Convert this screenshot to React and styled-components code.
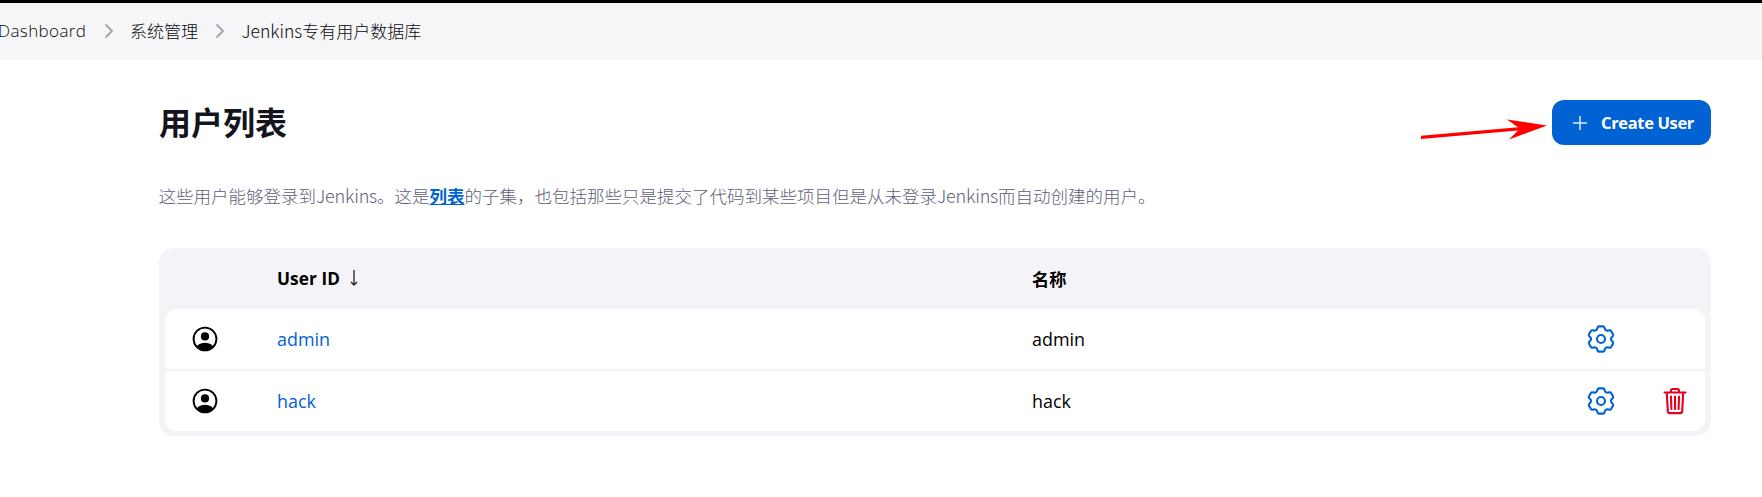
import React from "react";
import styled, { createGlobalStyle } from "styled-components";

const GlobalStyle = createGlobalStyle`
  * { box-sizing: border-box; }
  body {
    margin: 0;
    background: #fff;
    color: #14141f;
    font-family: "Open Sans", "Noto Sans CJK SC", sans-serif;
    overflow: hidden;
  }
`;

const Page = styled.div`
  height: 497px;
  border-top: 3px solid #000;
  overflow: hidden;
`;

const Breadcrumbs = styled.nav`
  display: flex;
  align-items: center;
  height: 57px;
  padding-bottom: 2px;
  background: #f6f6f9;
  color: #08080f;
  font-size: 17px;
  font-weight: 300;
  white-space: nowrap;
`;

const Crumb = styled.span`
  width: ${(p) => p.$width}px;
  margin-left: ${(p) => p.$indent || 0}px;
`;

const Latin = styled.span`
  font-family: "Open Sans", sans-serif;
  letter-spacing: ${(p) => p.$spacing || 0}px;
`;

const ProductName = styled.span`
  font-family: "Noto Sans CJK SC", sans-serif;
  font-size: ${(p) => p.$size}px;
  letter-spacing: ${(p) => p.$spacing || 0}px;
`;

const Chevron = styled.svg`
  width: 8px;
  height: 14px;
  margin: 1px 17.5px 0 18px;
  fill: none;
  stroke: #a3a3b3;
  stroke-width: 1.8;
  stroke-linecap: round;
  stroke-linejoin: round;
`;

const Main = styled.main`
  padding: 40px 51px 0 159px;
`;

const AppBar = styled.header`
  display: flex;
  align-items: center;
  height: 45px;
`;

const Title = styled.h1`
  margin: 0;
  font-size: 32px;
  line-height: 44px;
  font-weight: 700;
`;

const Pointer = styled.svg`
  width: 128px;
  height: 24px;
  margin: 4px 3px 0 auto;
  overflow: visible;
`;

const CreateButton = styled.button`
  display: flex;
  align-items: center;
  width: 159px;
  height: 45px;
  padding: 0 0 0 21px;
  gap: 14px;
  border: 0;
  border-radius: 12px;
  background: #0062d3;
  color: #fff;
  font: 700 16.5px "Open Sans", sans-serif;
  white-space: nowrap;
`;

const PlusIcon = styled.svg`
  flex: none;
  width: 14px;
  height: 14px;
  stroke: #e0ebf9;
  stroke-width: 1.5;
`;

const Description = styled.p`
  margin: 35px 0 0 -0.5px;
  height: 30px;
  line-height: 30px;
  font-size: 17.5px;
  font-weight: 300;
  color: #5e5e78;
  white-space: nowrap;
`;

const InlineLink = styled.a`
  color: #0062d3;
  font-weight: 700;
  text-decoration: underline;
`;

const Table = styled.section`
  display: grid;
  grid-template-rows: 61px 122px;
  margin-top: 38px;
  height: 188px;
  padding: 0 6px 5px;
  border-radius: 15px;
  background: #f3f3f8;
  color: #000;
`;

const Row = styled.div`
  display: grid;
  grid-template-columns: 112px 755px 1fr 74px 67px;
  align-items: center;
  font-size: 17.9px;
`;

const HeadRow = styled(Row)`
  padding-bottom: 1px;
  font-size: 17.2px;
  font-weight: 700;
`;

const Body = styled.div`
  display: grid;
  grid-template-rows: 60px 60px;
  row-gap: 2px;
`;

const UserRow = styled(Row)`
  background: #fff;
  border-radius: ${(p) => (p.$last ? "4px 4px 12px 12px" : "12px 12px 4px 4px")};
`;

const Cell = styled.div`
  display: flex;
  align-items: center;
`;

const AvatarCell = styled(Cell)`
  padding-left: 27px;
`;

const ActionCell = styled(Cell)`
  justify-content: flex-end;
  padding-right: ${(p) => p.$inset}px;
`;

const UserLink = styled.a`
  color: #0062d3;
`;

const SortArrow = styled.svg`
  width: 8px;
  height: 16px;
  margin-left: 10px;
  fill: none;
  stroke: #222;
  stroke-width: 1.3;
`;

const Avatar = styled.svg`
  width: 26px;
  height: 26px;
`;

const ActionIcon = styled.svg`
  width: 28px;
  height: 28px;
  fill: none;
  stroke: ${(p) => p.$color};
  stroke-width: 2.1;
  stroke-linecap: round;
  stroke-linejoin: round;
`;

const ChevronIcon = () => (
  <Chevron viewBox="0 0 8 14">
    <path d="M1 1l6 6-6 6" />
  </Chevron>
);

const PersonIcon = () => (
  <Avatar viewBox="0 0 26 26">
    <defs>
      <clipPath id="person-disc">
        <circle cx="13" cy="13" r="11.5" />
      </clipPath>
    </defs>
    <circle cx="13" cy="13" r="11.4" fill="none" stroke="#000" strokeWidth="1.9" />
    <circle cx="13" cy="10.4" r="4.1" />
    <ellipse cx="13" cy="23" rx="9" ry="6.2" clipPath="url(#person-disc)" />
  </Avatar>
);

const GearIcon = () => (
  <ActionIcon $color="#0062d3" viewBox="0 0 28 28">
    <circle cx="14" cy="14" r="4" />
    <path d="M12 1.400h4q1.100 0 1.400 1l.5 1.500q.3.900 1.200 1.400t1.900.3l1.500-.3q1.100-.2 1.600.7l1.900 3.300q.5.900-.2 1.800l-1.100 1.200q-.7.700-.7 1.700t.7 1.700l1.100 1.200q.7.900.2 1.800l-1.900 3.300q-.5.900-1.600.7l-1.500-.3q-1-.2-1.900.3t-1.200 1.400l-.5 1.500q-.3 1-1.400 1h-4q-1.100 0-1.400-1l-.5-1.500q-.3-.9-1.200-1.400t-1.900-.3l-1.500.3q-1.100.2-1.600-.7l-1.900-3.300q-.5-.9.200-1.800l1.100-1.200q.7-.7.700-1.700t-.7-1.700l-1.100-1.200q-.7-.9-.2-1.800l1.900-3.300q.5-.9 1.600-.7l1.500.3q1 .2 1.900-.3t1.200-1.400l.5-1.500q.3-1 1.400-1z" />
  </ActionIcon>
);

const TrashIcon = () => (
  <ActionIcon $color="#e6001f" viewBox="0 0 28 28">
    <path d="M3.500 5.500h21M5.800 5.500l1 18.600q.1 2 2 2h10.400q1.900 0 2-2l1-18.600M10 5.500V3.700q0-1.700 1.700-1.700h4.600q1.700 0 1.700 1.700v1.800M14 9.500v12.500M10 9.500l.4 12.500M18 9.500l-.4 12.500" />
  </ActionIcon>
);

const users = [
  { id: "admin", removable: false },
  { id: "hack", removable: true },
];

export default function App() {
  return (
    <Page>
      <GlobalStyle />
      <Breadcrumbs>
        <Crumb $indent={-2} $width={88.5}><Latin $spacing={0.4}>Dashboard</Latin></Crumb>
        <ChevronIcon />
        <Crumb $width={68}>系统管理</Crumb>
        <ChevronIcon />
        <Crumb><ProductName $size={17.5} $spacing={0}>Jenkins</ProductName>专有用户数据库</Crumb>
      </Breadcrumbs>
      <Main>
        <AppBar>
          <Title>用户列表</Title>
          <Pointer viewBox="0 0 128 24">
            <path d="M0 22.800L97 14.200 86 6.500 126 12.500 88 26.500 97 17.600 0 26z" fill="#f00" />
          </Pointer>
          <CreateButton>
            <PlusIcon viewBox="0 0 14 14"><path d="M7 0v14M0 7h14" /></PlusIcon>
            <Latin $spacing={-0.35}>Create User</Latin>
          </CreateButton>
        </AppBar>
        <Description>
          这些用户能够登录到<ProductName $size={18} $spacing={-0.2}>Jenkins</ProductName>。这是<InlineLink>列表</InlineLink>
          的子集，也包括那些只是提交了代码到某些项目但是从未登录<ProductName $size={18} $spacing={-0.2}>Jenkins</ProductName>而自动创建的用户。
        </Description>
        <Table>
          <HeadRow>
            <Cell />
            <Cell>
              <Latin $spacing={0.1}>User ID</Latin>
              <SortArrow viewBox="0 0 8 16"><path d="M4 0v15M1 12l3 3 3-3" /></SortArrow>
            </Cell>
            <Cell>名称</Cell>
          </HeadRow>
          <Body>
            {users.map((user) => (
              <UserRow key={user.id} $last={user.removable}>
                <AvatarCell><PersonIcon /></AvatarCell>
                <Cell><UserLink><Latin>{user.id}</Latin></UserLink></Cell>
                <Cell><Latin>{user.id}</Latin></Cell>
                <ActionCell $inset={23}><GearIcon /></ActionCell>
                <ActionCell $inset={16}>{user.removable && <TrashIcon />}</ActionCell>
              </UserRow>
            ))}
          </Body>
        </Table>
      </Main>
    </Page>
  );
}
